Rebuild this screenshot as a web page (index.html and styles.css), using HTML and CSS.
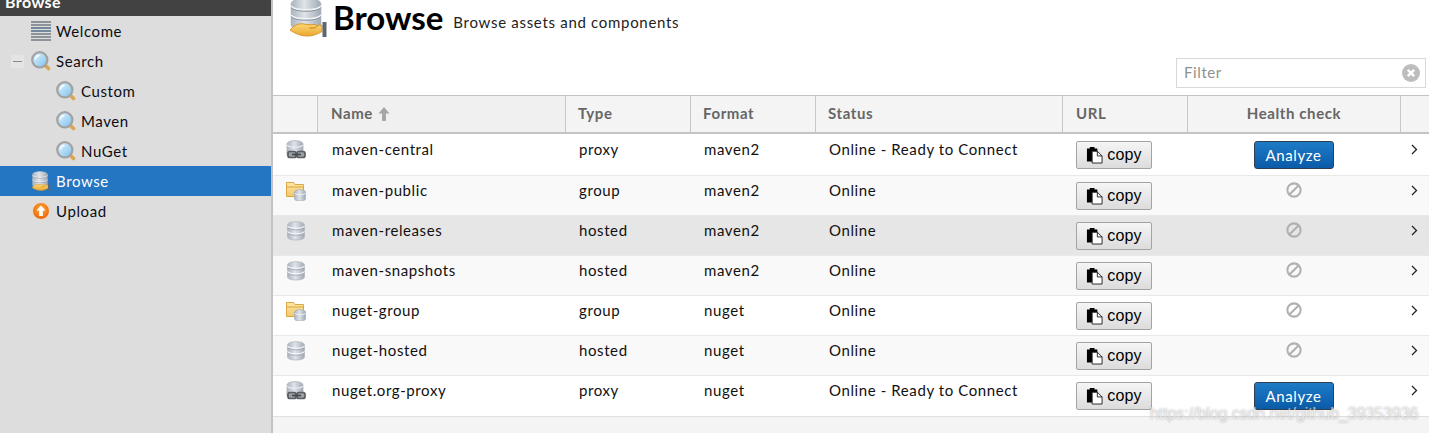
FILE: index.html
```html
<!DOCTYPE html>
<html lang="en">
<head>
<meta charset="utf-8">
<title>Browse</title>
<link rel="stylesheet" href="styles.css">
</head>
<body>
<svg class="defs" width="0" height="0" aria-hidden="true">
  <defs>
    <linearGradient id="db" x1="0" y1="0" x2="1" y2="0"><stop offset="0" stop-color="#aab3bd"/><stop offset=".45" stop-color="#dfe4e9"/><stop offset="1" stop-color="#9fa9b4"/></linearGradient>
    <linearGradient id="lens" x1="0" y1="0" x2="1" y2="1"><stop offset="0" stop-color="#e4f5ff"/><stop offset="1" stop-color="#7cc0ea"/></linearGradient>
    <linearGradient id="fold" x1="0" y1="0" x2="0" y2="1"><stop offset="0" stop-color="#fde8a8"/><stop offset="1" stop-color="#f4c768"/></linearGradient>
    <linearGradient id="hand" x1="0" y1="0" x2="0" y2="1"><stop offset="0" stop-color="#fbd675"/><stop offset="1" stop-color="#eaa92f"/></linearGradient>
    <radialGradient id="org" cx=".5" cy=".4" r=".6"><stop offset="0" stop-color="#ffb13b"/><stop offset="1" stop-color="#ea5f0c"/></radialGradient>
    <symbol id="i-search" viewBox="0 0 20 20">
      <path d="M14 14l3.500 3.500" stroke="#dba652" stroke-width="3.600" stroke-linecap="round"/>
      <circle cx="8.800" cy="8.800" r="7.600" fill="url(#lens)" stroke="#a2a2a2" stroke-width="2.200"/>
      <path d="M4.500 8.500a4 4 0 0 1 4-4" fill="none" stroke="#fff" stroke-width="1.300"/>
    </symbol>
    <symbol id="i-db" viewBox="0 0 20 20">
      <path d="M1.500 4c0-4.500 17-4.500 17 0v12c0 4-17 4-17 0z" fill="url(#db)" stroke="#b3bac1" stroke-width=".8"/>
      <path d="M1.500 5c2 3 15 3 17 0M1.500 10.500c2 3 15 3 17 0" fill="none" stroke="#f4f6f8" stroke-width="1.300"/>
      <path d="M1.500 6.500c2 3 15 3 17 0M1.500 12c2 3 15 3 17 0" fill="none" stroke="#98a2ac" stroke-width=".7"/>
    </symbol>
    <symbol id="i-proxy" viewBox="0 0 20 20">
      <path d="M1 4c0-4.500 16-4.500 16 0v11c0 3.500-16 3.500-16 0z" fill="url(#db)" stroke="#a9b0b8" stroke-width=".8"/>
      <path d="M1 5c2 3 14 3 16 0" fill="none" stroke="#eef1f4" stroke-width="1.200"/>
      <rect x="2" y="11.500" width="8" height="6" rx="2" fill="#9aa0a6" stroke="#5a5d61" stroke-width="1.700"/>
      <rect x="11" y="11.500" width="8" height="6" rx="2" fill="#9aa0a6" stroke="#5a5d61" stroke-width="1.700"/>
      <path d="M6 14.500h9" stroke="#44474b" stroke-width="1.600"/>
    </symbol>
    <symbol id="i-group" viewBox="0 0 20 20">
      <path d="M.5 1.500h7l1.500 2h8.500v12H.5z" fill="url(#fold)" stroke="#dba643"/>
      <path d="M1 6h16" stroke="#d9a643"/>
      <path d="M8.500 11c0-3 11-3 11 0v7c0 2.600-11 2.600-11 0z" fill="url(#db)" stroke="#a8b0b8" stroke-width=".7"/>
      <path d="M9 12.500c2 1.500 8.500 1.500 10.500 0" fill="none" stroke="#f0f3f5"/>
    </symbol>
    <symbol id="i-browse" viewBox="0 0 38 40">
      <path d="M2 7c0-8 30-8 30 0v21c0 6-30 6-30 0z" fill="url(#db)" stroke="#b3bac1" stroke-width=".6"/>
      <path d="M2 9c3 5 27 5 30 0M2 18c3 5 27 5 30 0" fill="none" stroke="#f2f4f6" stroke-width="1.600"/>
      <path d="M2 10.500c3 5 27 5 30 0M2 19.500c3 5 27 5 30 0" fill="none" stroke="#8a95a0"/>
      <path d="M1 33c4-5 9-7 14-6 4 .8 7 .8 11 .5 2.500 0 2.500 3-.5 3.500h-5c4 .5 7-1 9.500-3l3 .5v6c-4 2-8 4.500-14 4.500-7 0-12-2-18-6z" fill="url(#hand)" stroke="#d9982a"/>
      <rect x="33.500" y="25" width="4" height="15" fill="#5e6670"/>
    </symbol>
    <symbol id="i-copy" viewBox="0 0 18 18">
      <path d="M1 2h3V.5h5V2h3v14H1z" fill="#000"/>
      <path d="M6.500 5h5.500l5 5v7.500H6.500z" fill="#fff" stroke="#222"/>
      <path d="M12 5v5h5" fill="none" stroke="#222"/>
    </symbol>
    <symbol id="i-na" viewBox="0 0 14 14">
      <circle cx="7" cy="7" r="5.800" fill="none" stroke="#b0b0b0" stroke-width="1.800"/>
      <path d="M3 11L11 3" stroke="#b0b0b0" stroke-width="1.800"/>
    </symbol>
    <symbol id="i-more" viewBox="0 0 7 11">
      <path d="M1 1l4.500 4.500L1 10" fill="none" stroke="#222" stroke-width="1.300"/>
    </symbol>
  </defs>
</svg>
<div class="app">
  <aside class="side">
    <div class="side-head"><span class="side-title">Browse</span></div>
    <nav class="tree">
      <div class="node">
        <svg class="ico" viewBox="0 0 20 20"><path d="M0 1h20M0 4h20M0 7h20M0 10h20M0 13h20M0 16h20M0 19h20" stroke="#3f4a57" stroke-width="1.100"/><path d="M0 7h20M0 10h20" stroke="#5c7ea3" stroke-width="1.100"/></svg>
        <span>Welcome</span>
      </div>
      <div class="node">
        <span class="toggle"><i></i></span>
        <svg class="ico"><use href="#i-search"/></svg>
        <span>Search</span>
      </div>
      <div class="node sub"><svg class="ico"><use href="#i-search"/></svg><span>Custom</span></div>
      <div class="node sub"><svg class="ico"><use href="#i-search"/></svg><span>Maven</span></div>
      <div class="node sub"><svg class="ico"><use href="#i-search"/></svg><span>NuGet</span></div>
      <div class="node on"><svg class="ico"><use href="#i-browse"/></svg><span>Browse</span></div>
      <div class="node">
        <svg class="ico" viewBox="0 0 20 20"><circle cx="10" cy="10" r="8.500" fill="url(#org)" stroke="#f0e0d0"/><path d="M10 4.500l4.500 5h-2.700v5.500H8.200V9.500H5.500z" fill="#fff"/></svg>
        <span>Upload</span>
      </div>
    </nav>
  </aside>
  <main class="main">
    <header class="page-head">
      <svg class="big-ico"><use href="#i-browse"/></svg>
      <h1>Browse</h1>
      <span class="sub-title">Browse assets and components</span>
    </header>
    <div class="toolbar">
      <div class="filter">
        <span class="filter-text">Filter</span>
        <svg class="clear" viewBox="0 0 18 18"><circle cx="9" cy="9" r="9" fill="#bdbdbd"/><path d="M5.800 5.800l6.400 6.400M12.200 5.800l-6.400 6.400" stroke="#fff" stroke-width="2.400"/></svg>
      </div>
    </div>
    <div class="grid">
      <div class="row head">
        <div class="c"></div>
        <div class="c sorted">Name <svg class="sort" viewBox="0 0 12 14"><path d="M6 0l5.500 6.500H8V14H4V6.500H.5z" fill="#a6a6a6"/></svg></div>
        <div class="c">Type</div>
        <div class="c">Format</div>
        <div class="c">Status</div>
        <div class="c url">URL</div>
        <div class="c center">Health check</div>
        <div class="c"></div>
      </div>
      <div class="row first">
        <div class="c"><svg class="ico"><use href="#i-proxy"/></svg></div><div class="c name">maven-central</div><div class="c">proxy</div><div class="c">maven2</div><div class="c">Online - Ready to Connect</div>
        <div class="c"><button class="copy"><svg><use href="#i-copy"/></svg>copy</button></div>
        <div class="c center"><button class="analyze">Analyze</button></div>
        <div class="c more"><svg><use href="#i-more"/></svg></div>
      </div>
      <div class="row alt">
        <div class="c"><svg class="ico"><use href="#i-group"/></svg></div><div class="c name">maven-public</div><div class="c">group</div><div class="c">maven2</div><div class="c">Online</div>
        <div class="c"><button class="copy"><svg><use href="#i-copy"/></svg>copy</button></div>
        <div class="c center"><svg class="na"><use href="#i-na"/></svg></div>
        <div class="c more"><svg><use href="#i-more"/></svg></div>
      </div>
      <div class="row hover">
        <div class="c"><svg class="ico"><use href="#i-db"/></svg></div><div class="c name">maven-releases</div><div class="c">hosted</div><div class="c">maven2</div><div class="c">Online</div>
        <div class="c"><button class="copy"><svg><use href="#i-copy"/></svg>copy</button></div>
        <div class="c center"><svg class="na"><use href="#i-na"/></svg></div>
        <div class="c more"><svg><use href="#i-more"/></svg></div>
      </div>
      <div class="row alt">
        <div class="c"><svg class="ico"><use href="#i-db"/></svg></div><div class="c name">maven-snapshots</div><div class="c">hosted</div><div class="c">maven2</div><div class="c">Online</div>
        <div class="c"><button class="copy"><svg><use href="#i-copy"/></svg>copy</button></div>
        <div class="c center"><svg class="na"><use href="#i-na"/></svg></div>
        <div class="c more"><svg><use href="#i-more"/></svg></div>
      </div>
      <div class="row">
        <div class="c"><svg class="ico"><use href="#i-group"/></svg></div><div class="c name">nuget-group</div><div class="c">group</div><div class="c">nuget</div><div class="c">Online</div>
        <div class="c"><button class="copy"><svg><use href="#i-copy"/></svg>copy</button></div>
        <div class="c center"><svg class="na"><use href="#i-na"/></svg></div>
        <div class="c more"><svg><use href="#i-more"/></svg></div>
      </div>
      <div class="row alt">
        <div class="c"><svg class="ico"><use href="#i-db"/></svg></div><div class="c name">nuget-hosted</div><div class="c">hosted</div><div class="c">nuget</div><div class="c">Online</div>
        <div class="c"><button class="copy"><svg><use href="#i-copy"/></svg>copy</button></div>
        <div class="c center"><svg class="na"><use href="#i-na"/></svg></div>
        <div class="c more"><svg><use href="#i-more"/></svg></div>
      </div>
      <div class="row last">
        <div class="c"><svg class="ico"><use href="#i-proxy"/></svg></div><div class="c name">nuget.org-proxy</div><div class="c">proxy</div><div class="c">nuget</div><div class="c">Online - Ready to Connect</div>
        <div class="c"><button class="copy"><svg><use href="#i-copy"/></svg>copy</button></div>
        <div class="c center"><button class="analyze">Analyze</button></div>
        <div class="c more"><svg><use href="#i-more"/></svg></div>
      </div>
    </div>
  </main>
</div>
<div class="watermark">https://blog.csdn.net/github_39353936</div>
</body>
</html>
```
FILE: styles.css
```css
* { box-sizing: border-box; }
html, body { margin: 0; height: 433px; overflow: hidden; }
body { font-family: Lato, "Open Sans", sans-serif; font-size: 15px; color: #111; background: #f4f4f4; letter-spacing: .6px; }
.defs { position: absolute; }
.app { display: flex; height: 433px; }

.side { width: 273px; flex: none; background: #dddddd; border-right: 2px solid #c2c2c2; }
.side-head { height: 16px; background: #424242; overflow: hidden; padding-left: 5px; }
.side-title { display: block; margin-top: -8px; color: #fff; font-weight: 700; font-size: 16px; line-height: 20px; letter-spacing: .4px; }
.node { height: 30px; display: flex; align-items: center; gap: 5px; padding-left: 31px; position: relative; color: #0c0c14; }
.node .ico { width: 20px; height: 20px; flex: none; }
.node.sub { padding-left: 56px; }
.node.on { background: #2475c2; color: #fff; }
.toggle { position: absolute; left: 11px; top: 9px; width: 13px; height: 13px; background: #e4e4e4; display: flex; align-items: center; justify-content: center; }
.toggle i { display: block; width: 9px; height: 1px; background: #8a8a8a; }

.main { flex: 1; min-width: 0; display: flex; flex-direction: column; }
.page-head { height: 58px; background: #fff; display: flex; align-items: flex-start; padding-left: 16px; overflow: hidden; }
.big-ico { width: 38px; height: 40px; margin-top: -3px; flex: none; }
.page-head h1 { margin: 0 0 0 6px; font-size: 33px; line-height: 34px; font-weight: 700; color: #000; letter-spacing: 0; }
.sub-title { margin: 13px 0 0 10px; font-size: 15px; line-height: 18px; color: #222; letter-spacing: .7px; }
.toolbar { height: 37px; background: #fff; display: flex; justify-content: flex-end; padding-right: 3px; align-items: flex-start; }
.filter { width: 250px; height: 30px; border: 1px solid #d9d9d9; display: flex; align-items: center; justify-content: space-between; padding: 0 5px 0 7px; color: #8f8f8f; font-size: 15px; background: #fff; }
.filter-text { padding-bottom: 2px; }
.clear { width: 18px; height: 18px; }

.grid { background: #f4f4f4; }
.row { display: grid; grid-template-columns: 44px 248px 125px 125px 247px 125px 213px 1fr; height: 40px; background: #fff; border-bottom: 1px solid #e9e9e9; padding-top: 6px; }
.row.first { height: 42px; padding-top: 7px; }
.row.last { height: 41px; border-bottom-color: #e0e0e0; }
.row.alt { background: #f9f9f9; }
.row.hover { background: #e6e6e6; }
.c { padding-left: 14px; line-height: 16px; min-width: 0; white-space: nowrap; }
.c.name { padding-left: 15px; }
.c .ico { width: 20px; height: 20px; display: block; margin-left: -1px; margin-top: -1px; }
.center { text-align: center; padding-left: 0; }

.row.head { height: 39px; background: #f4f4f4; border-top: 1px solid #c4c4c4; border-bottom: 2px solid #c4c4c4; padding-top: 0; font-weight: 700; color: #666; }
.head .c { line-height: 34px; }
.head .c + .c { border-left: 1px solid #c8c8c8; height: 36px; padding-left: 12px; }
.head .c.center { padding-left: 0; }
.head .c.sorted { background: #f0f0f0; padding-left: 13px; }
.head .c.url { padding-left: 13px; }
.sort { width: 12px; height: 14px; vertical-align: -2px; margin-left: 1px; }

.copy { display: flex; align-items: center; justify-content: center; gap: 4px; width: 76px; height: 28px; padding: 0; border: 1px solid #a3a3a3; border-radius: 2px; background: linear-gradient(#f5f5f5, #dcdcdc); font-family: "Liberation Sans", sans-serif; font-size: 16px; letter-spacing: .2px; color: #000; }
.copy svg { width: 17px; height: 18px; flex: none; }
.analyze { width: 80px; height: 28px; padding: 0 0 1px; border: 1px solid #2c3e50; border-radius: 3px; background: linear-gradient(#1e7bc6, #0a5ba8); color: #fff; font-family: Lato, sans-serif; font-size: 15px; letter-spacing: .6px; }
.na { width: 16px; height: 16px; display: inline-block; }
.more { padding-left: 11px; }
.more svg { width: 7px; height: 11px; display: block; margin-top: 3px; }

.watermark { position: absolute; left: 1150px; top: 405px; font-family: "Liberation Sans", sans-serif; font-size: 16px; letter-spacing: -.08px; color: rgba(255,255,255,.6); text-shadow: 0 0 2px rgba(110,110,110,.6); white-space: nowrap; }
```
